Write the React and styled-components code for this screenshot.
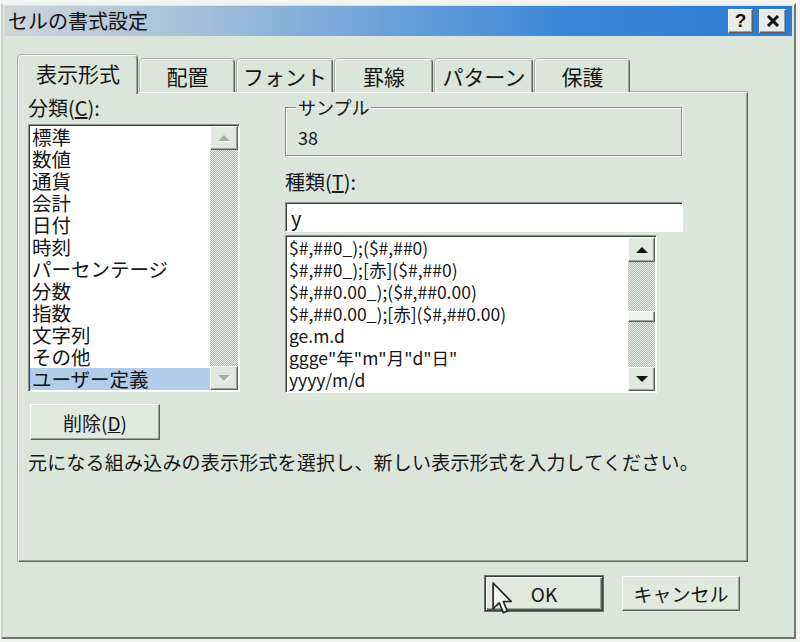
// tools
import React from "react"
import styled, { css, createGlobalStyle } from "styled-components"

// data
const categories = [
  "標準",
  "数値",
  "通貨",
  "会計",
  "日付",
  "時刻",
  "パーセンテージ",
  "分数",
  "指数",
  "文字列",
  "その他",
  "ユーザー定義",
]
const formats = [
  "$#,##0_);($#,##0)",
  "$#,##0_);[赤]($#,##0)",
  "$#,##0.00_);($#,##0.00)",
  "$#,##0.00_);[赤]($#,##0.00)",
  "ge.m.d",
  "ggge\"年\"m\"月\"d\"日\"",
  "yyyy/m/d",
]
const tabs = [
  { label: "表示形式", w: 120 },
  { label: "配置", w: 95 },
  { label: "フォント", w: 96 },
  { label: "罫線", w: 98 },
  { label: "パターン", w: 98 },
  { label: "保護", w: 95 },
]

// css
const GlobalStyle = createGlobalStyle`
  html, body {
    margin: 0;
    padding: 0;
    background: #f3f5f3;
  }
  body {
    font-family: "Noto Sans CJK JP", "Noto Sans", sans-serif;
    color: #151515;
  }
`
const raised = css`
  box-sizing: border-box;
  background: #e0e8e0;
  border: 1px solid;
  border-color: #ffffff #5c615c #5c615c #ffffff;
  box-shadow: inset -1px -1px 0 #9aa29a;
`
const sunken = css`
  box-sizing: border-box;
  background: #ffffff;
  border: 1px solid;
  border-color: #8c938c #ffffff #ffffff #8c938c;
  box-shadow: inset 1px 1px 0 #3c403c;
`
const dither = css`
  background: repeating-conic-gradient(#b2bab2 0% 25%, #e6ece6 0% 50%) 0 0 / 2px 2px;
`

// window
const Window = styled.div`
  position: relative;
  box-sizing: border-box;
  width: 795px;
  height: 636px;
  margin: 3px 0 0 1px;
  display: flex;
  flex-direction: column;
  background: #dce5dc;
  border: 2px solid;
  border-color: #eef2ee #6f756f #6f756f #c9d1c9;
`
const TitleBar = styled.div`
  height: 30px;
  margin: 1px 2px 0;
  padding: 0 6px 0 3px;
  display: flex;
  align-items: center;
  background: linear-gradient(to right, #cdd5d9 0%, #a9c2da 22%, #6da2d9 48%, #3a86d6 72%, #2c7bd4 100%);
`
const TitleText = styled.div`
  flex: 1;
  font-size: 20px;
  line-height: 1;
  color: #111;
`
const TitleButton = styled.div`
  ${raised}
  width: ${props => props.w}px;
  height: 24px;
  margin-left: 6px;
  display: flex;
  align-items: center;
  justify-content: center;
  background: #e8ece8;
  font-family: "Liberation Sans", sans-serif;
  font-weight: bold;
  font-size: 19px;
  color: #111;
`
const Body = styled.div`
  padding: 19px 0 0 15px;
  display: flex;
  flex-direction: column;
`

// tabs
const TabRow = styled.div`
  position: relative;
  z-index: 1;
  height: 37px;
  display: flex;
  align-items: flex-end;
`
const Tab = styled.div`
  box-sizing: border-box;
  width: ${props => props.w}px;
  height: ${props => (props.active ? 39 : 33)}px;
  margin-bottom: ${props => (props.active ? -2 : 0)}px;
  margin-left: ${props => (props.first ? 0 : 2)}px;
  display: flex;
  align-items: center;
  justify-content: center;
  padding-bottom: ${props => (props.active ? 4 : 0)}px;
  background: #dce5dc;
  border: 1px solid;
  border-bottom: none;
  border-color: #ffffff #5c615c transparent #ffffff;
  border-radius: 4px 4px 0 0;
  box-shadow: inset -1px 0 0 #9aa29a, -1px 0 0 #a9b1a9, 0 -1px 0 #a9b1a9;
  font-size: 21px;
`

// panel
const Panel = styled.div`
  box-sizing: border-box;
  width: 730px;
  height: 470px;
  padding: 3px 0 0 9px;
  display: flex;
  flex-direction: column;
  border: 1px solid;
  border-color: #ffffff #5c615c #5c615c #ffffff;
  box-shadow: inset -1px -1px 0 #9aa29a, -1px 0 0 #a9b1a9, 0 -1px 0 #a9b1a9;
`
const TopRow = styled.div`
  display: flex;
  gap: 45px;
`
const Column = styled.div`
  width: ${props => props.w}px;
  display: flex;
  flex-direction: column;
`
const Label = styled.div`
  height: 28px;
  line-height: 24px;
  font-size: 20px;
  margin-top: ${props => props.mt || 0}px;
`
const ListBox = styled.div`
  ${sunken}
  width: ${props => props.w}px;
  height: ${props => props.h}px;
  margin-top: ${props => props.mt || 0}px;
  padding: 1px;
  display: flex;
  overflow: hidden;
`
const Items = styled.div`
  flex: 1;
  min-width: 0;
  display: flex;
  flex-direction: column;
  overflow: hidden;
`
const Item = styled.div`
  flex: none;
  height: ${props => props.lh}px;
  line-height: ${props => props.lh}px;
  padding-left: 2px;
  font-size: ${props => props.size}px;
  white-space: nowrap;
  background: ${props => (props.selected ? "#b1cdea" : "transparent")};
`
const ScrollBar = styled.div`
  width: ${props => props.w}px;
  display: flex;
  flex-direction: column;
`
const ScrollButton = styled.div`
  ${raised}
  height: ${props => props.h}px;
  flex: none;
  display: flex;
  align-items: center;
  justify-content: center;
`
const Arrow = styled.span`
  width: 0;
  height: 0;
  border-left: 6px solid transparent;
  border-right: 6px solid transparent;
  ${props =>
    props.dir === "up"
      ? css`border-bottom: 6px solid ${props.disabled ? "#a6aea6" : "#111"};`
      : css`border-top: 6px solid ${props.disabled ? "#a6aea6" : "#111"};`}
  filter: ${props => (props.disabled ? "drop-shadow(1px 1px 0 #fff)" : "none")};
`
const Track = styled.div`
  ${dither}
  flex: ${props => (props.h ? "none" : 1)};
  height: ${props => (props.h ? `${props.h}px` : "auto")};
`
const Thumb = styled.div`
  ${raised}
  flex: none;
  height: ${props => props.h}px;
  background: #eef2ee;
`
const SampleBox = styled.fieldset`
  box-sizing: border-box;
  width: 397px;
  height: 60px;
  margin: 0;
  padding: 0 0 0 10px;
  min-width: 0;
  border: 1px solid #8a918a;
  box-shadow: inset 1px 1px 0 #fff, 1px 1px 0 #fff;
`
const Legend = styled.legend`
  padding: 0 2px;
  font-size: 18px;
  line-height: 22px;
`
const SampleValue = styled.div`
  margin: 9px 0 0 2px;
  font-size: 18px;
  line-height: 20px;
`
const TextBox = styled.input`
  ${sunken}
  width: 398px;
  height: 30px;
  margin: 4px 0 0;
  padding: 0 0 0 5px;
  font-family: inherit;
  font-size: 20px;
  color: #151515;
  outline: none;
`
const PushButton = styled.div`
  ${raised}
  position: relative;
  width: ${props => props.w}px;
  height: ${props => props.h}px;
  display: flex;
  align-items: center;
  justify-content: center;
  font-size: 19px;
  ${props =>
    props.primary &&
    css`
      border-color: #3a3e3a;
      box-shadow: inset 1px 1px 0 #fff, inset -1px -1px 0 #5c615c, inset -2px -2px 0 #9aa29a;
      outline: 1px solid #6a706a;
    `}
`
const DeleteRow = styled.div`
  margin: 11px 0 0 2px;
`
const Description = styled.div`
  margin-top: 10px;
  font-size: 19px;
  line-height: 24px;
  letter-spacing: 0.2px;
  white-space: nowrap;
`

// footer
const Footer = styled.div`
  box-sizing: border-box;
  width: 730px;
  margin-top: 14px;
  padding-right: 8px;
  display: flex;
  justify-content: flex-end;
  gap: 19px;
`
const Cursor = styled.svg`
  position: absolute;
  left: 6px;
  top: 5px;
`

const Close = () => (
  <svg width="14" height="12" viewBox="0 0 14 12">
    <path d="M2 1 L12 11 M12 1 L2 11" stroke="#111" strokeWidth="3" />
  </svg>
)

const Scroller = props => (
  <ScrollBar w={props.w}>
    <ScrollButton h={props.upH}>
      <Arrow dir="up" disabled={props.disabled} />
    </ScrollButton>
    {props.thumbAt ? (
      <>
        <Track h={props.thumbAt} />
        <Thumb h={11} />
        <Track />
      </>
    ) : (
      <Track />
    )}
    <ScrollButton h={24}>
      <Arrow dir="down" disabled={props.disabled} />
    </ScrollButton>
  </ScrollBar>
)

export default function App() {
  return (
    <>
      <GlobalStyle />
      <Window>
        <TitleBar>
          <TitleText>セルの書式設定</TitleText>
          <TitleButton w={25}>?</TitleButton>
          <TitleButton w={27}>
            <Close />
          </TitleButton>
        </TitleBar>
        <Body>
          <TabRow>
            {tabs.map((t, i) => (
              <Tab key={t.label} w={t.w} active={i === 0} first={i === 0}>
                {t.label}
              </Tab>
            ))}
          </TabRow>
          <Panel>
            <TopRow>
              <Column w={212}>
                <Label>
                  分類(<u>C</u>):
                </Label>
                <ListBox w={212} h={268}>
                  <Items>
                    {categories.map((c, i) => (
                      <Item key={c} lh={22} size={19.5} selected={i === categories.length - 1}>
                        {c}
                      </Item>
                    ))}
                  </Items>
                  <Scroller w={28} upH={24} disabled />
                </ListBox>
              </Column>
              <Column w={400}>
                <SampleBox>
                  <Legend>サンプル</Legend>
                  <SampleValue>38</SampleValue>
                </SampleBox>
                <Label mt={14}>
                  種類(<u>T</u>):
                </Label>
                <TextBox defaultValue="y" readOnly />
                <ListBox w={372} h={158} mt={3}>
                  <Items>
                    {formats.map(f => (
                      <Item key={f} lh={22} size={17.5}>
                        {f}
                      </Item>
                    ))}
                  </Items>
                  <Scroller w={27} upH={25} thumbAt={49} />
                </ListBox>
              </Column>
            </TopRow>
            <DeleteRow>
              <PushButton w={130} h={36}>
                削除(<u>D</u>)
              </PushButton>
            </DeleteRow>
            <Description>
              元になる組み込みの表示形式を選択し、新しい表示形式を入力してください。
            </Description>
          </Panel>
          <Footer>
            <PushButton w={118} h={35} primary>
              OK
              <Cursor width="20" height="33" viewBox="0 0 12 20">
                <path
                  d="M0.6 0.6 L0.6 16.2 L4.3 12.6 L6.8 18.6 L9.2 17.6 L6.8 11.8 L11.6 11.8 Z"
                  fill="#f4f4f4"
                  stroke="#222"
                  strokeWidth="1"
                  strokeLinejoin="round"
                />
              </Cursor>
            </PushButton>
            <PushButton w={118} h={35}>
              キャンセル
            </PushButton>
          </Footer>
        </Body>
      </Window>
    </>
  )
}
